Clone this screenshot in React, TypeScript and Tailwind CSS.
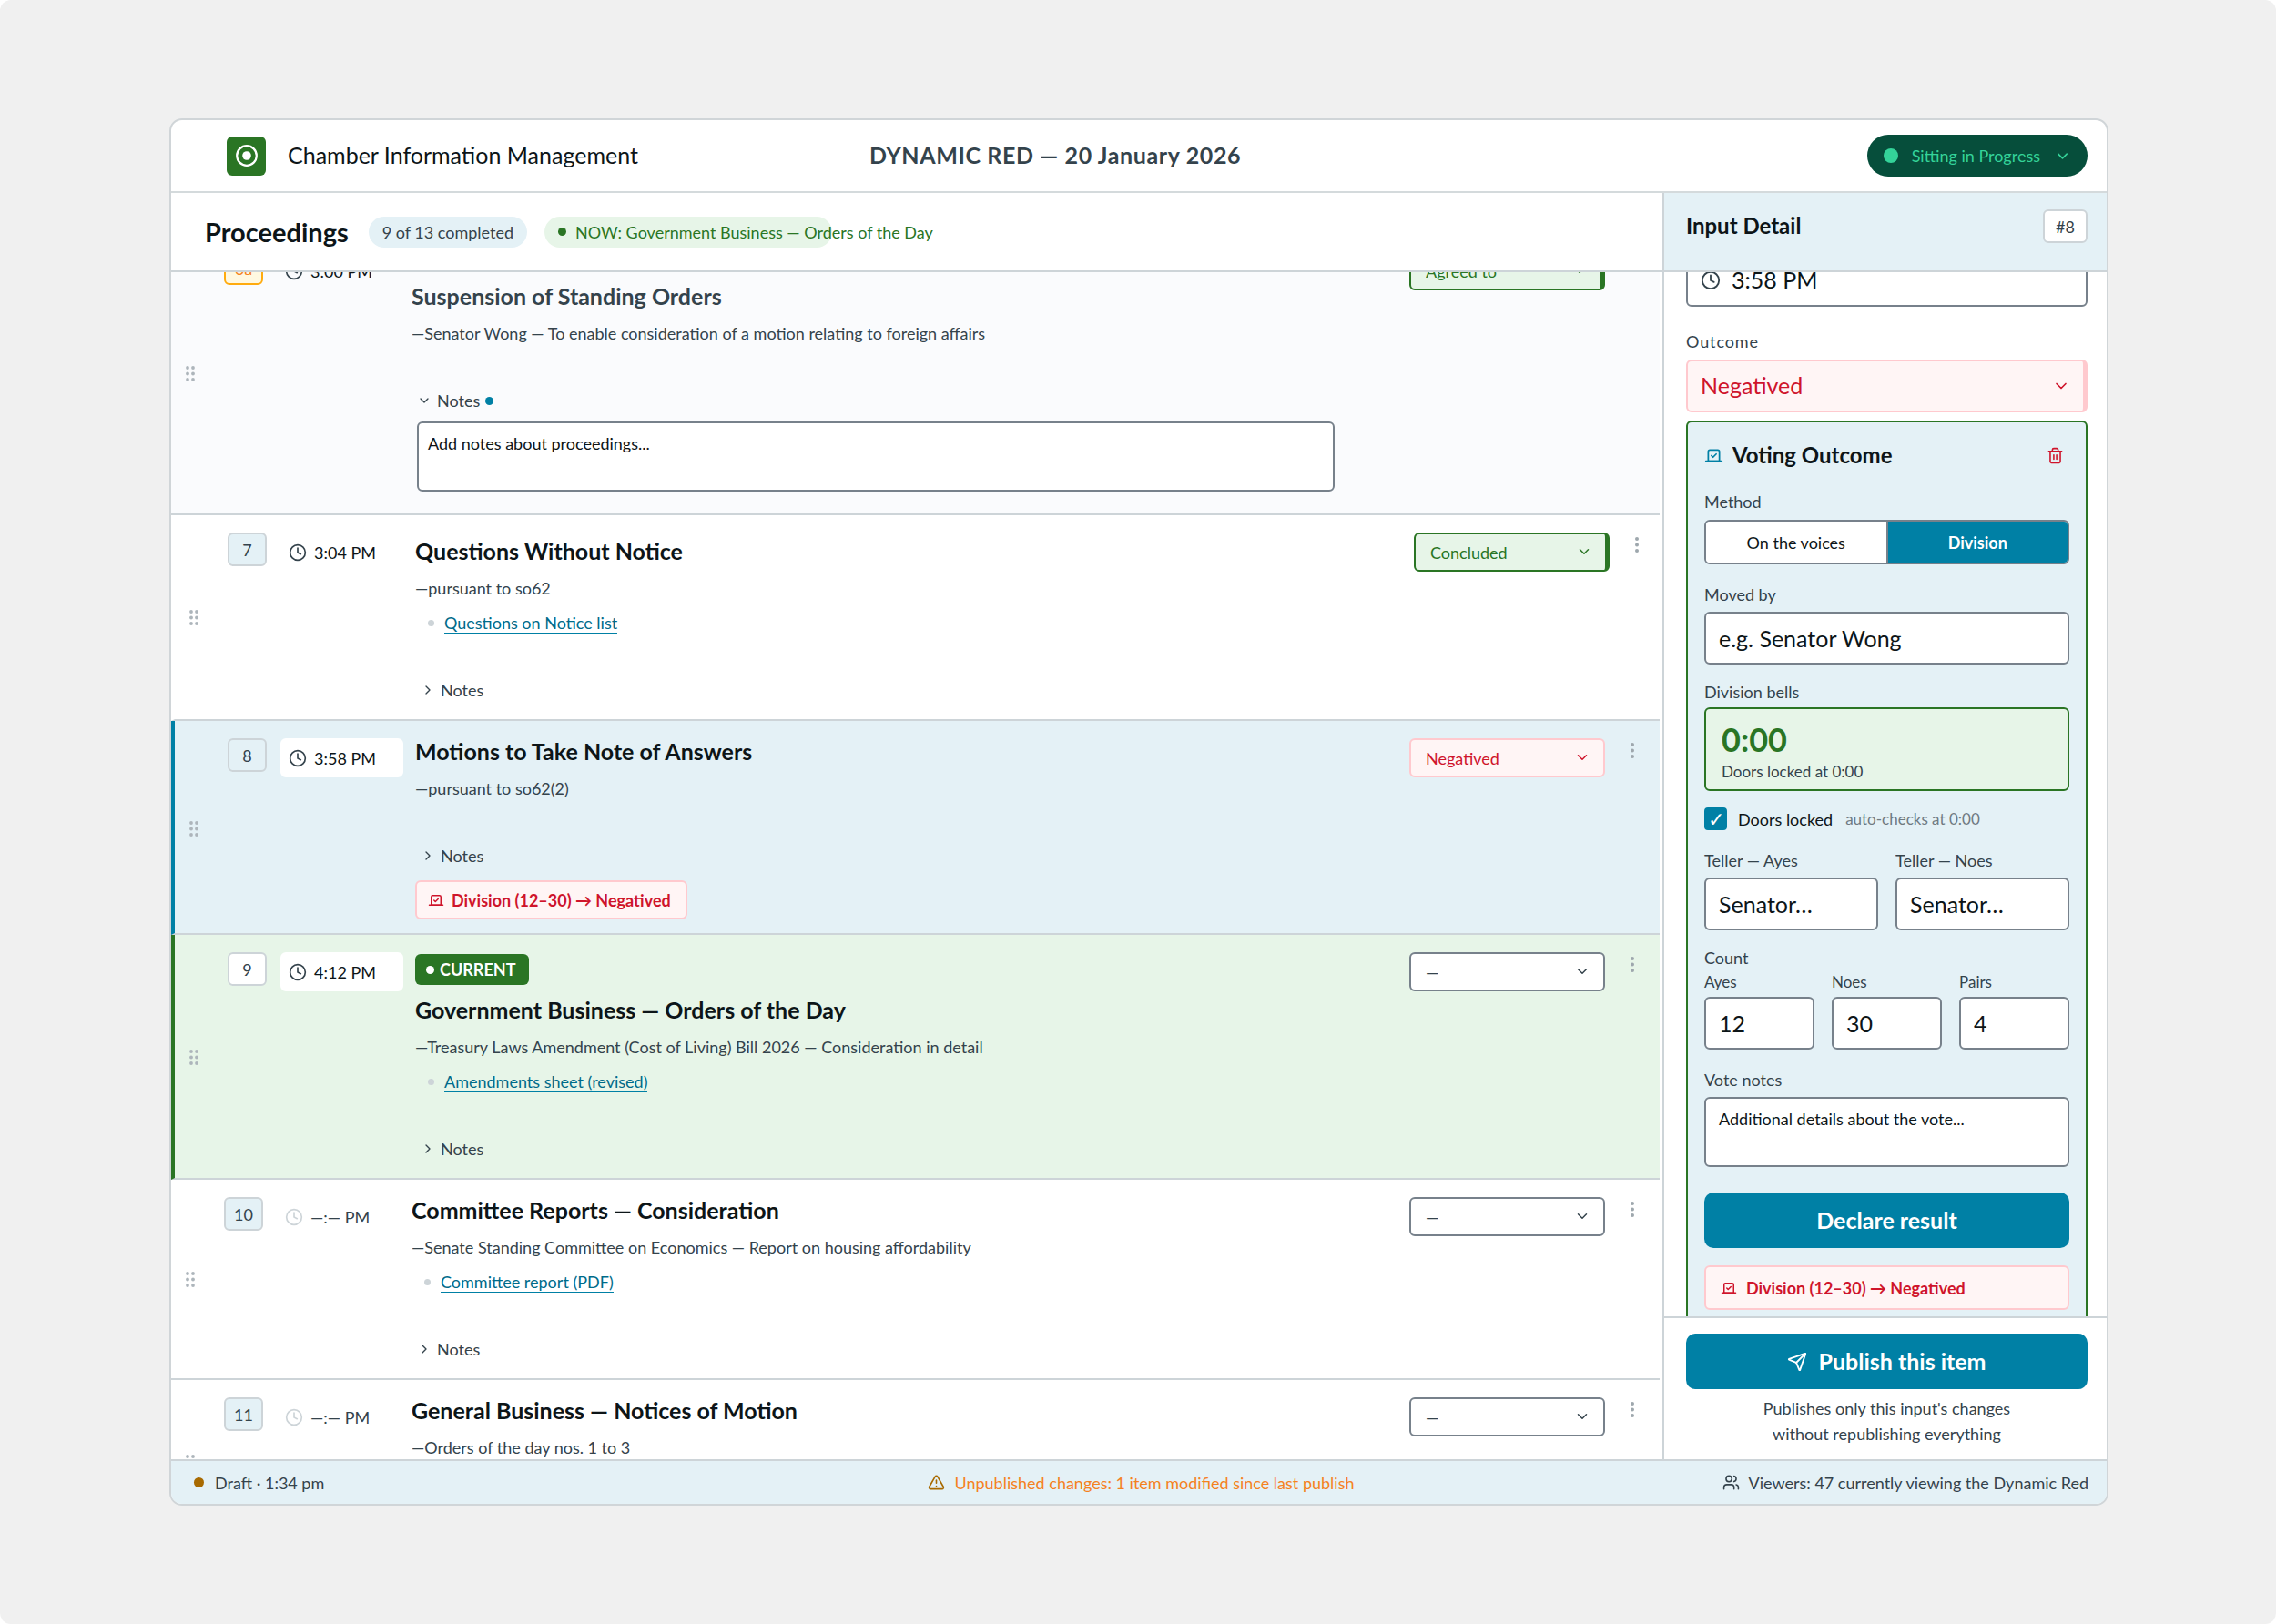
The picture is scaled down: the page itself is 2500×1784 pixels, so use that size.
import { useId, useState, type InputHTMLAttributes } from "react";
import clsx from "clsx";
import {
  ChevronDown,
  ChevronRight,
  Clock,
  Send,
  Trash2,
  TriangleAlert,
  Users,
  Vote,
} from "lucide-react";

type Tone = "green" | "red" | "plain";

type Item = {
  id: string;
  time?: string;
  title: string;
  detail: string;
  link?: string;
  outcome: string;
  tone: Tone;
  division?: string;
  notesOpen?: boolean;
  state?: "past" | "selected" | "current" | "moved";
};

const ITEMS: Item[] = [
  {
    id: "6a",
    time: "3:00 PM",
    title: "Suspension of Standing Orders",
    detail: "—Senator Wong — To enable consideration of a motion relating to foreign affairs",
    outcome: "Agreed to",
    tone: "green",
    notesOpen: true,
    state: "past",
  },
  {
    id: "7",
    time: "3:04 PM",
    title: "Questions Without Notice",
    detail: "—pursuant to so62",
    link: "Questions on Notice list",
    outcome: "Concluded",
    tone: "green",
    state: "moved",
  },
  {
    id: "8",
    time: "3:58 PM",
    title: "Motions to Take Note of Answers",
    detail: "—pursuant to so62(2)",
    outcome: "Negatived",
    tone: "red",
    division: "Division (12–30) → Negatived",
    state: "selected",
  },
  {
    id: "9",
    time: "4:12 PM",
    title: "Government Business — Orders of the Day",
    detail: "—Treasury Laws Amendment (Cost of Living) Bill 2026 — Consideration in detail",
    link: "Amendments sheet (revised)",
    outcome: "—",
    tone: "plain",
    state: "current",
  },
  {
    id: "10",
    title: "Committee Reports — Consideration",
    detail: "—Senate Standing Committee on Economics — Report on housing affordability",
    link: "Committee report (PDF)",
    outcome: "—",
    tone: "plain",
  },
  {
    id: "11",
    title: "General Business — Notices of Motion",
    detail: "—Orders of the day nos. 1 to 3",
    outcome: "—",
    tone: "plain",
  },
];

const selectTone: Record<Tone, string> = {
  green: "border-2 border-r-[5px] border-[#2a7524] bg-[#e7f5e8] text-[#2a7524]",
  red: "border-2 border-[#ffc9ce] bg-[#fff5f5] text-[#cf142b]",
  plain: "border-2 border-[#77818b] bg-white text-[#34434c]",
};

const chevronTone: Record<Tone, string> = {
  green: "right-[19px] text-[#2a7524]",
  red: "right-4 text-[#cf142b]",
  plain: "right-4 text-[#34434c]",
};

function Grip() {
  return (
    <svg width="10" height="17" viewBox="0 0 10 17" className="text-[#adb5bb]" fill="currentColor">
      {[2, 8].map((x) =>
        [2, 8.5, 15].map((y) => <circle key={`${x}-${y}`} cx={x} cy={y} r="1.9" />)
      )}
    </svg>
  );
}

function Dots() {
  return (
    <svg width="4" height="17" viewBox="0 0 4 17" className="text-[#9ea7ad]" fill="currentColor">
      <circle cx="2" cy="2" r="2" />
      <circle cx="2" cy="8.5" r="2" />
      <circle cx="2" cy="15" r="2" />
    </svg>
  );
}

function OutcomeSelect({ item }: { item: Item }) {
  return (
    <div className="relative w-[215px] shrink-0">
      <select
        aria-label={`Outcome of item ${item.id}`}
        defaultValue={item.outcome}
        className={clsx(
          "h-[43px] w-full appearance-none rounded-md pl-4 text-lg",
          selectTone[item.tone]
        )}
      >
        <option>{item.outcome}</option>
      </select>
      <ChevronDown
        size={18}
        className={clsx("pointer-events-none absolute top-3", chevronTone[item.tone])}
      />
    </div>
  );
}

function Row({ item }: { item: Item }) {
  const [open, setOpen] = useState(!!item.notesOpen);
  const { state } = item;
  const shifted = state === "selected" || state === "current" || state === "moved";

  return (
    <li
      className={clsx(
        "flex items-stretch border-b-2 border-b-[#cdd4d8] pt-[19px] pl-4",
        shifted && "border-l-4",
        state === "moved" ? "border-l-transparent pr-3" : "pr-[17px]",
        state === "past" && "bg-[#fafbfd]",
        state === "selected" && "border-l-[#0080a5] bg-[#e4f1f6]",
        state === "current" && "border-l-[#2a7524] bg-[#e7f5e8]",
        item.notesOpen ? "pb-[19px]" : item.division ? "pb-[15px]" : "pb-[18px]"
      )}
    >
      <button aria-label="Reorder" className="mr-8 self-center">
        <Grip />
      </button>

      <span
        className={clsx(
          "mr-[15px] flex h-[37px] w-[43px] shrink-0 items-center justify-center rounded-md border-2 text-lg",
          item.id === "6a"
            ? "border-[#ffab0f] bg-[#fff8e1] text-[#f5821f]"
            : "border-[#cdd4d8] text-[#34434c]",
          state === "current" ? "bg-white" : item.id !== "6a" && "bg-[#e4f1f6]"
        )}
      >
        {item.id}
      </span>

      <div
        className={clsx(
          "mr-[13px] flex h-[43px] w-[135px] shrink-0 items-center gap-2 rounded-md pl-[9px] text-lg",
          (state === "selected" || state === "current") && "bg-white"
        )}
      >
        <Clock size={20} className={item.time ? "text-[#34434c]" : "text-[#cdd4d8]"} />
        <span className={item.time ? "text-[#0d1518]" : "text-[#34434c]"}>
          {item.time ?? "—:— PM"}
        </span>
      </div>

      <div
        className={clsx(
          "min-w-0 flex-1 pr-[88px] text-lg leading-7 text-[#34434c]",
          state === "past" && "pt-[35px]",
          state === "moved" && "pt-1.5"
        )}
      >
        {state === "current" && (
          <span className="mt-0.5 mb-[13px] flex h-[34px] w-fit items-center gap-1.5 rounded-md bg-[#2a7524] pr-[15px] pl-3 font-bold text-white">
            <span className="size-[9px] rounded-full bg-white" />
            CURRENT
          </span>
        )}
        <h3 className={clsx("text-[25px] leading-7 font-bold", state !== "past" && "text-[#0d1518]")}>
          {item.title}
        </h3>
        <p className="mt-[13px]">{item.detail}</p>
        {item.link && (
          <div className="mt-2.5 flex items-center gap-[11px] pl-3.5">
            <span className="size-[7px] rounded-full bg-[#cdd4d8]" />
            <a href="#" className="text-[#006b8a]">
              <span className="border-b border-[#0080a5]">{item.link}</span>
            </a>
          </div>
        )}
        <button
          aria-expanded={open}
          onClick={() => setOpen(!open)}
          className="mt-[46px] flex items-center gap-1.5 pl-1.5"
        >
          {open ? <ChevronDown size={16} /> : <ChevronRight size={16} />}
          Notes
          {item.notesOpen && <span className="size-[9px] rounded-full bg-[#0080a5]" />}
        </button>
        {open && (
          <textarea
            aria-label={`Notes for ${item.title}`}
            placeholder="Add notes about proceedings..."
            className="mt-[9px] mb-[5px] ml-1.5 block h-[77px] w-full resize-none rounded-md border-2 border-[#77818b] bg-white px-2.5 py-2 placeholder:text-[#0d1518]"
          />
        )}
        {item.division && (
          <div className="mt-[13px] flex h-[43px] w-fit items-center gap-2 rounded-md border-2 border-[#ffc9ce] bg-[#fff5f5] pr-4 pl-3 font-bold text-[#cf142b]">
            <Vote size={18} />
            {item.division}
          </div>
        )}
      </div>

      <OutcomeSelect item={item} />
      <button aria-label="More actions" className="ml-4 flex h-[27px] w-[27px] items-center justify-center">
        <Dots />
      </button>
    </li>
  );
}

function Field({
  label,
  small,
  className,
  ...rest
}: { label: string; small?: boolean } & InputHTMLAttributes<HTMLInputElement>) {
  const id = useId();
  return (
    <div className={clsx("flex min-w-0 flex-1 flex-col", className)}>
      <label
        htmlFor={id}
        className={clsx("leading-6 text-[#34434c]", small ? "mb-1 text-[17px]" : "mb-[7px] text-lg")}
      >
        {label}
      </label>
      <input
        id={id}
        {...rest}
        className="h-[58px] w-full rounded-md border-2 border-[#77818b] bg-white px-3.5 text-[25px] text-[#0d1518] placeholder:text-[#0d1518]"
      />
    </div>
  );
}

function VotingOutcome() {
  const [method, setMethod] = useState("Division");
  return (
    <section className="mt-[9px] rounded-md border-2 border-[#2a7524] bg-[#e4f1f6] px-[18px] py-5 text-lg text-[#34434c]">
      <div className="flex h-8 items-center">
        <Vote size={21} className="text-[#0080a5]" />
        <h3 className="ml-2.5 text-2xl font-bold text-[#0d1518]">Voting Outcome</h3>
        <button aria-label="Remove vote" className="mr-1.5 ml-auto text-[#cf142b]">
          <Trash2 size={19} />
        </button>
      </div>

      <p className="mt-[23px] leading-6">Method</p>
      <div className="mt-2 flex h-[49px] overflow-hidden rounded-md border-2 border-[#77818b]">
        {["On the voices", "Division"].map((m) => (
          <button
            key={m}
            onClick={() => setMethod(m)}
            className={clsx(
              "flex-1 first:border-r-2 first:border-[#77818b]",
              m === method ? "bg-[#0080a5] font-bold text-white" : "bg-white text-[#0d1518]"
            )}
          >
            {m}
          </button>
        ))}
      </div>

      <Field label="Moved by" placeholder="e.g. Senator Wong" className="mt-[21px]" />

      <p className="mt-[18px] leading-6">Division bells</p>
      <div className="mt-[5px] h-[92px] rounded-md border-2 border-[#2a7524] bg-[#e7f5e8] px-[17px] pt-[13px]">
        <p className="text-4xl leading-10 font-bold text-[#2a7524]">0:00</p>
        <p className="mt-1 text-[17px] leading-6">Doors locked at 0:00</p>
      </div>

      <div className="mt-[18px] flex items-center">
        <span className="relative size-[25px]">
          <input
            id="doors"
            type="checkbox"
            defaultChecked
            className="peer block size-[25px] appearance-none rounded border-2 border-[#0080a5] checked:bg-[#0080a5]"
          />
          <span className="pointer-events-none absolute inset-0 hidden text-center text-[22px] leading-[25px] text-white peer-checked:block">
            ✓
          </span>
        </span>
        <label htmlFor="doors" className="ml-3 leading-6 text-[#0d1518]">
          Doors locked
        </label>
        <span className="ml-3.5 text-[17px] leading-6 text-[#6f7a82]">auto-checks at 0:00</span>
      </div>

      <div className="mt-[21px] flex gap-[19px]">
        <Field label="Teller — Ayes" placeholder="Senator…" />
        <Field label="Teller — Noes" placeholder="Senator…" />
      </div>

      <p className="mt-[18px] leading-6">Count</p>
      <div className="mt-[3px] flex gap-[19px]">
        <Field small label="Ayes" defaultValue="12" />
        <Field small label="Noes" defaultValue="30" />
        <Field small label="Pairs" defaultValue="4" />
      </div>

      <div className="mt-[21px]">
        <label htmlFor="vote-notes" className="block leading-6">
          Vote notes
        </label>
        <textarea
          id="vote-notes"
          placeholder="Additional details about the vote..."
          className="mt-[7px] block h-[77px] w-full resize-none rounded-md border-2 border-[#77818b] bg-white px-3.5 py-2 leading-7 placeholder:text-[#0d1518]"
        />
      </div>

      <button className="mt-7 h-[61px] w-full rounded-[10px] bg-[#0080a5] text-[25px] font-bold text-white">
        Declare result
      </button>
      <div className="mt-[19px] flex h-[49px] items-center gap-2.5 rounded-md border-2 border-[#ffc9ce] bg-[#fff5f5] px-4 font-bold text-[#cf142b]">
        <Vote size={18} />
        Division (12–30) → Negatived
      </div>
    </section>
  );
}

function InputDetail() {
  return (
    <aside className="flex w-[488px] shrink-0 flex-col border-l-2 border-[#cdd4d8]">
      <div className="flex h-[87px] shrink-0 items-start justify-between border-b-2 border-[#cdd4d8] bg-[#e4f1f6] pt-[18px] pr-[21px] pl-6">
        <h2 className="text-2xl leading-9 font-bold text-[#0d1518]">Input Detail</h2>
        <span className="flex h-[37px] w-[49px] items-center justify-center rounded-md border-2 border-[#cdd4d8] bg-white text-lg text-[#34434c]">
          #8
        </span>
      </div>

      <div className="min-h-0 flex-1 overflow-hidden pr-[21px] pl-6">
        <div className="-mt-5 flex h-[58px] items-center gap-3 rounded-md border-2 border-[#77818b] px-3.5">
          <Clock size={22} className="shrink-0 text-[#34434c]" />
          <input
            aria-label="Time"
            defaultValue="3:58 PM"
            className="min-w-0 flex-1 text-[25px] text-[#0d1518]"
          />
        </div>

        <label
          htmlFor="outcome"
          className="mt-[26px] block text-lg leading-6 tracking-wider text-[#34434c]"
        >
          Outcome
        </label>
        <div className="relative mt-2">
          <select
            id="outcome"
            className="h-[58px] w-full appearance-none rounded-md border-2 border-r-[5px] border-[#ffc9ce] bg-[#fff5f5] pl-3.5 text-[25px] text-[#cf142b]"
          >
            <option>Negatived</option>
          </select>
          <ChevronDown size={20} className="pointer-events-none absolute top-[19px] right-[19px] text-[#cf142b]" />
        </div>

        <VotingOutcome />
      </div>

      <div className="shrink-0 border-t-2 border-[#cdd4d8] pt-[17px] pr-[21px] pb-3.5 pl-6 text-center">
        <button className="flex h-[61px] w-full items-center justify-center gap-3 rounded-[10px] bg-[#0080a5] text-[25px] font-bold text-white">
          <Send size={22} />
          Publish this item
        </button>
        <p className="mt-[7px] text-lg leading-7 text-[#34434c]">
          Publishes only this input's changes
          <br />
          without republishing everything
        </p>
      </div>
    </aside>
  );
}

export default function App() {
  return (
    <div className="flex h-screen rounded-xl bg-[#f0f0f0] py-[130px] pr-[184px] pl-[186px] font-[Lato,Carlito,sans-serif]">
      <div className="flex min-w-0 flex-1 flex-col overflow-hidden rounded-[14px] border-2 border-[#d0d5d8] bg-white">
        <header className="flex h-20 shrink-0 items-center border-b-2 border-[#d4dadc] pr-[21px] pl-[61px]">
          <span className="flex size-[43px] items-center justify-center rounded-md bg-[#2a7524]">
            <svg width="24" height="24" viewBox="0 0 24 24">
              <circle cx="12" cy="12" r="10.8" fill="none" stroke="#fff" strokeWidth="2.2" />
              <circle cx="12" cy="12" r="4.8" fill="#fff" />
            </svg>
          </span>
          <span className="ml-6 text-[25px] text-[#0d1518]">Chamber Information Management</span>
          <h1 className="ml-[254px] text-[25px] font-bold tracking-wide text-[#34434c]">
            DYNAMIC RED — 20 January 2026
          </h1>
          <button className="ml-auto flex h-[46px] items-center gap-[15px] rounded-full bg-[#064e3b] px-[18px] text-lg text-[#34d399]">
            <span className="size-4 rounded-full bg-[#34d399]" />
            Sitting in Progress
            <ChevronDown size={19} />
          </button>
        </header>

        <div className="flex min-h-0 flex-1">
          <main className="flex min-w-0 flex-1 flex-col">
            <div className="flex h-[87px] shrink-0 items-center border-b-2 border-[#cdd4d8] pl-[37px] text-lg whitespace-nowrap">
              <h2 className="text-[29px] font-bold text-[#0d1518]">Proceedings</h2>
              <span className="ml-[22px] flex h-[34px] items-center rounded-full bg-[#e4f1f6] px-[15px] text-[#34434c]">
                9 of 13 completed
              </span>
              <span className="ml-[19px] flex h-[34px] w-[316px] items-center rounded-full bg-[#e7f5e8] pl-[15px] text-[#2a7524]">
                <span className="mr-2.5 size-[9px] shrink-0 rounded-full bg-[#2a7524]" />
                NOW: Government Business — Orders of the Day
              </span>
            </div>
            <div className="min-h-0 flex-1 overflow-hidden pr-[3px]">
              <ul className="-mt-[42px]">
                {ITEMS.map((item) => (
                  <Row key={item.id} item={item} />
                ))}
              </ul>
            </div>
          </main>
          <InputDetail />
        </div>

        <footer className="grid h-[49px] shrink-0 grid-cols-[1fr_auto_1fr] items-center border-t-2 border-[#cdd4d8] bg-[#e4f1f6] pr-5 pl-[25px] text-lg text-[#34434c]">
          <span className="flex items-center gap-3">
            <span className="size-[11px] rounded-full bg-[#a86a00]" />
            Draft · 1:34 pm
          </span>
          <span className="flex items-center gap-2.5 text-[#f5821f]">
            <TriangleAlert size={19} className="text-[#a86a00]" />
            Unpublished changes: 1 item modified since last publish
          </span>
          <span className="flex items-center gap-2.5 justify-self-end">
            <Users size={19} />
            Viewers: 47 currently viewing the Dynamic Red
          </span>
        </footer>
      </div>
    </div>
  );
}
